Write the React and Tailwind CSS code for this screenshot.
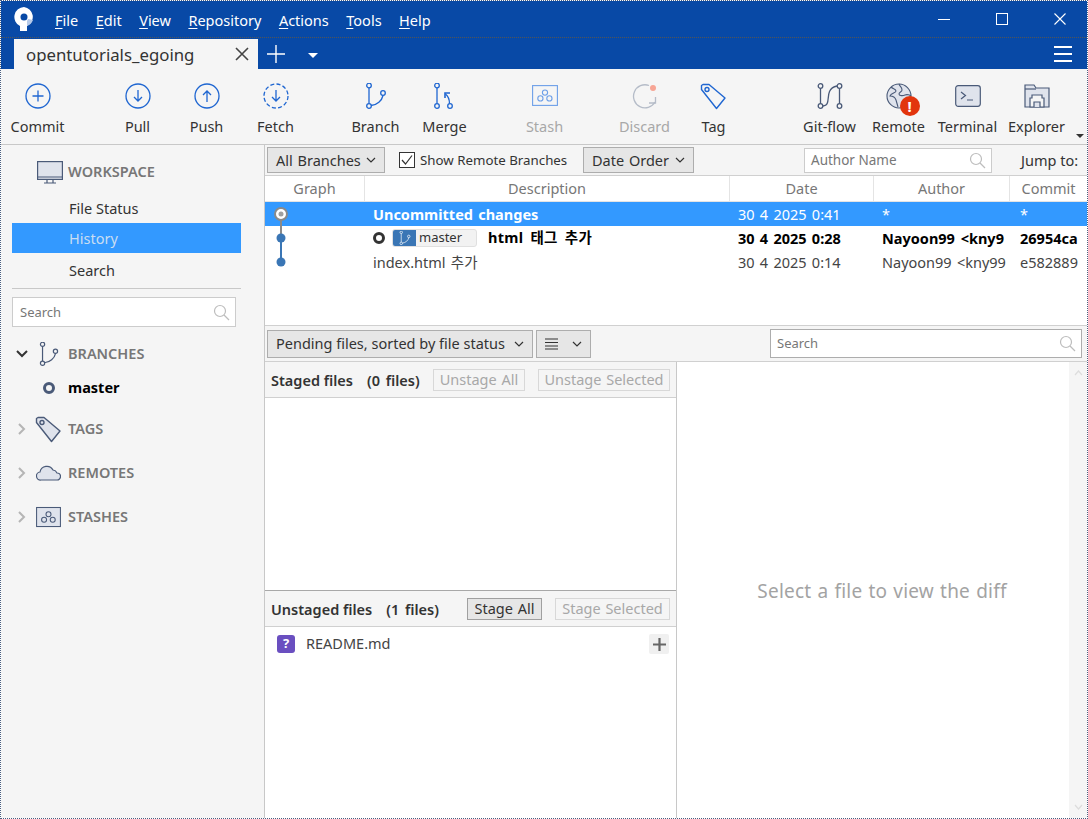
import React from 'react'

const blue = '#1f66d1'
const slate = '#4a5a78'
const fillSlate = '#dfe3ec'

function Chevron({ className = '' }) {
  return (
    <svg width="10" height="6" viewBox="0 0 10 6" className={className}>
      <path d="M1 1l4 4 4-4" fill="none" stroke="#333" strokeWidth="1.2" />
    </svg>
  )
}

function Mnemonic({ text }) {
  return (
    <span>
      <span className="underline underline-offset-2">{text[0]}</span>
      {text.slice(1)}
    </span>
  )
}

function SearchGlyph() {
  return (
    <svg width="17" height="17" viewBox="0 0 17 17">
      <circle cx="7" cy="7" r="5.5" fill="none" stroke="#bdbdbd" strokeWidth="1.2" />
      <path d="M11 11l5 5" stroke="#bdbdbd" strokeWidth="1.2" />
    </svg>
  )
}

function CircleIcon({ dashed, children }) {
  return (
    <svg width="26" height="26" viewBox="0 0 26 26">
      <circle cx="13" cy="13" r="12" fill="none" stroke={blue} strokeWidth="1.3" strokeDasharray={dashed ? '4 2.3' : undefined} />
      {children}
    </svg>
  )
}

const arrowDown = <path d="M13 7v11M9 14l4 4 4-4" fill="none" stroke={blue} strokeWidth="1.3" />
const arrowUp = <path d="M13 19V8M9 12l4-4 4 4" fill="none" stroke={blue} strokeWidth="1.3" />

function BranchIcon({ color = blue, size = 26 }) {
  return (
    <svg width={size} height={size} viewBox="0 0 26 26" fill="none" stroke={color} strokeWidth="1.3">
      <circle cx="6" cy="2.5" r="2.3" />
      <circle cx="6" cy="23" r="2.3" />
      <circle cx="20" cy="10" r="2.3" />
      <path d="M6 5v15.5M8 22.5c6-.5 11-5 12-10" />
    </svg>
  )
}

function MergeIcon() {
  return (
    <svg width="26" height="26" viewBox="0 0 26 26" fill="none" stroke={blue} strokeWidth="1.3">
      <circle cx="5" cy="2.5" r="2.3" />
      <circle cx="5" cy="23" r="2.3" />
      <circle cx="18" cy="23" r="2.3" />
      <path d="M5 5v15.5M17.5 20.5c0-4-1-7-4-9.5" />
      <path d="M13 15v-5h5" strokeWidth="1.6" />
    </svg>
  )
}

function StashIcon({ color = '#6d9fe8', fill = 'none', size = 26 }) {
  return (
    <svg width={size} height={size} viewBox="0 0 26 22" fill={fill} stroke={color} strokeWidth="1.1">
      <rect x="0.6" y="0.6" width="24.8" height="19.8" />
      <circle cx="13" cy="7.6" r="2.6" fill="none" />
      <circle cx="8.4" cy="13.4" r="2.6" fill="none" />
      <circle cx="17.4" cy="13.4" r="2.6" fill="none" />
    </svg>
  )
}

function DiscardIcon() {
  return (
    <svg width="26" height="26" viewBox="0 0 26 26" fill="none" stroke="#b5bcc8" strokeWidth="1.3">
      <path d="M17 2.5A11.5 11.5 0 1 0 23 19" />
      <path d="M17 20h6.5v-6" />
      <circle cx="21" cy="5" r="3" fill="#f7a595" stroke="none" />
    </svg>
  )
}

function TagIcon({ color = blue, fill = 'none' }) {
  return (
    <svg width="27" height="27" viewBox="0 0 27 27" fill={fill} stroke={color} strokeWidth="1.4">
      <path d="M1.5 6.5V2.5l1.5-1h6l16 13.5-8.5 10.5z" strokeLinejoin="round" />
      <circle cx="7" cy="6.5" r="2" />
    </svg>
  )
}

function GitFlowIcon() {
  return (
    <svg width="26" height="26" viewBox="0 0 26 26" fill="none" stroke={slate} strokeWidth="1.3">
      <circle cx="3.5" cy="3" r="2.3" />
      <circle cx="3.5" cy="23" r="2.3" />
      <circle cx="22.5" cy="3" r="2.3" />
      <circle cx="22.5" cy="23" r="2.3" />
      <path d="M3.5 5.5v15M22.5 5.5v15M6 23c7 0 4-9 6.5-14.5C14 5 17 3.5 20 3" />
    </svg>
  )
}

function GlobeIcon() {
  return (
    <svg width="26" height="26" viewBox="0 0 26 26" stroke={slate} strokeWidth="1.1">
      <circle cx="13" cy="13" r="12" fill={fillSlate} />
      <path d="M5 4c2 2 5 2 5 4s-5 2-6 5c2 0 5 1 6 4l2 7M13 1c1 3 3 3 3 6 0 2-3 2-3 4s4 2 6 1 5 0 6 1" fill="none" />
    </svg>
  )
}

function TerminalIcon() {
  return (
    <svg width="26" height="22" viewBox="0 0 26 22" fill={fillSlate} stroke={slate} strokeWidth="1.2">
      <rect x="0.7" y="0.7" width="24.6" height="20.6" rx="2.5" />
      <path d="M6 7l4.5 3.5L6 14M12 15h6" fill="none" />
    </svg>
  )
}

function ExplorerIcon() {
  return (
    <svg width="26" height="24" viewBox="0 0 26 24" fill={fillSlate} stroke={slate} strokeWidth="1.2">
      <path d="M1 23V1h9l2 3h13v19z" />
      <path d="M1 5h11" fill="none" />
      <path d="M6 23v-9h2v-3h10v3h2v9z" fill="#f5f5f5" />
      <path d="M10 23v-5h6v5" fill={fillSlate} />
    </svg>
  )
}

function ToolButton({ icon, label, disabled }) {
  return (
    <div className="flex h-[75px] w-[69px] flex-col items-center">
      <div className="mt-[13px] flex h-[28px] items-center justify-center">{icon}</div>
      <span className={`mt-[6px] text-[14.5px] leading-5 ${disabled ? 'text-[#a8a8a8]' : 'text-[#333]'}`}>{label}</span>
    </div>
  )
}

function Toolbar() {
  return (
    <div className="relative flex h-[76px] border-b border-[#c8c8c8] bg-[#f5f5f5] pl-[2px]">
      <ToolButton label="Commit" icon={<CircleIcon><path d="M7.5 13h11M13 7.5v11" stroke={blue} strokeWidth="1.3" /></CircleIcon>} />
      <div className="ml-[31px] flex">
        <ToolButton label="Pull" icon={<CircleIcon>{arrowDown}</CircleIcon>} />
        <ToolButton label="Push" icon={<CircleIcon>{arrowUp}</CircleIcon>} />
        <ToolButton label="Fetch" icon={<CircleIcon dashed>{arrowDown}</CircleIcon>} />
      </div>
      <div className="ml-[31px] flex">
        <ToolButton label="Branch" icon={<BranchIcon />} />
        <ToolButton label="Merge" icon={<MergeIcon />} />
      </div>
      <div className="ml-[31px] flex">
        <ToolButton label="Stash" disabled icon={<StashIcon />} />
      </div>
      <div className="ml-[31px] flex">
        <ToolButton label="Discard" disabled icon={<DiscardIcon />} />
        <ToolButton label="Tag" icon={<TagIcon />} />
      </div>
      <div className="ml-[47px] flex">
        <ToolButton label="Git-flow" icon={<GitFlowIcon />} />
        <ToolButton
          label="Remote"
          icon={
            <div className="relative">
              <GlobeIcon />
              <div className="absolute left-[14px] top-[13px] flex h-5 w-5 items-center justify-center rounded-full bg-[#e2350d] text-[15px] leading-none font-bold text-white">!</div>
            </div>
          }
        />
        <ToolButton label="Terminal" icon={<TerminalIcon />} />
        <ToolButton label="Explorer" icon={<ExplorerIcon />} />
      </div>
      <div className="absolute bottom-[6px] right-[3px] h-0 w-0 border-x-[4px] border-t-[4px] border-x-transparent border-t-[#333]" />
    </div>
  )
}

function TitleBar() {
  return (
    <div className="flex h-[37px] items-center border-b border-dotted border-[#555] bg-[#0849a6] text-white">
      <svg width="22" height="26" viewBox="0 0 22 26" className="ml-[12px]">
        <path d="M11 1a10 10 0 0 0-4 19v5h7v-5a10 10 0 0 0-3-19z" fill="#fff" />
        <circle cx="11" cy="11" r="3.5" fill="#0849a6" />
        <path d="M14 20a10 10 0 0 0 6-6l-5-1-1 2z" fill="#b5c9e8" />
      </svg>
      <nav className="ml-[20px] flex gap-[17.5px] pt-[3px] text-[14.5px]">
        {['File', 'Edit', 'View', 'Repository', 'Actions', 'Tools', 'Help'].map((m) => (
          <Mnemonic key={m} text={m} />
        ))}
      </nav>
      <div className="-mr-[2px] ml-auto flex items-center">
        <div className="flex h-[36px] w-[58px] items-center justify-center">
          <div className="mt-[1px] h-[1px] w-3 bg-white" />
        </div>
        <div className="flex h-[36px] w-[58px] items-center justify-center">
          <div className="h-3 w-3 border border-white" />
        </div>
        <div className="flex h-[36px] w-[58px] items-center justify-center">
          <svg width="12" height="12" viewBox="0 0 12 12">
            <path d="M.5.5l11 11M11.5.5l-11 11" stroke="#fff" strokeWidth="1.1" />
          </svg>
        </div>
      </div>
    </div>
  )
}

function TabRow() {
  return (
    <div className="flex h-[31px] items-end bg-[#0849a6] pl-[13px] text-white">
      <div className="flex h-[30px] w-[244px] items-center bg-[#f5f5f5] pl-[12px] pr-[9px] text-[16.8px] text-[#333]">
        <span className="flex-1 pt-px">opentutorials_egoing</span>
        <svg width="14" height="14" viewBox="0 0 14 14">
          <path d="M1 1l12 12M13 1L1 13" stroke="#444" strokeWidth="1.6" />
        </svg>
      </div>
      <div className="flex h-[30px] items-center">
        <svg width="18" height="18" viewBox="0 0 18 18" className="ml-[9px]">
          <path d="M9 0v18M0 9h18" stroke="#fff" strokeWidth="1.4" />
        </svg>
        <div className="ml-[23px] mt-[2px] h-0 w-0 border-x-[5px] border-t-[5px] border-x-transparent border-t-white" />
      </div>
      <div className="ml-auto mr-[15px] flex h-[30px] flex-col justify-center gap-[5px]">
        <div className="h-[2px] w-[18px] bg-white" />
        <div className="h-[2px] w-[18px] bg-white" />
        <div className="h-[2px] w-[18px] bg-white" />
      </div>
    </div>
  )
}

function NavItem({ label, active, className = 'pt-[2px]' }) {
  return (
    <div className={`flex h-[30px] items-center pl-[57px] text-[14.5px] ${active ? 'bg-[#3399ff] text-[#c9ddf2]' : 'text-[#333]'} ${className}`}>
      {label}
    </div>
  )
}

function SectionRow({ expanded, icon, label, className = '' }) {
  return (
    <div className={`flex h-[30px] items-center ${className}`}>
      <svg width="14" height="14" viewBox="0 0 14 14" className="ml-[14px]">
        {expanded ? (
          <path d="M2 4l5 5 5-5" fill="none" stroke="#333" strokeWidth="2" />
        ) : (
          <path d="M4 2l5 5-5 5" fill="none" stroke="#b5b5b5" strokeWidth="2" />
        )}
      </svg>
      <div className="flex w-[39px] justify-center">{icon}</div>
      <span className="text-[14.5px] font-semibold text-[#777]">{label}</span>
    </div>
  )
}

function Sidebar() {
  return (
    <aside className="w-[264px] shrink-0 border-r border-[#c8c8c8] bg-[#f5f5f5]">
      <div className="flex h-[48px] items-center pl-[36px] pt-[6px]">
        <svg width="26" height="23" viewBox="0 0 26 23" fill={fillSlate} stroke={slate} strokeWidth="1.2">
          <rect x="0.6" y="0.6" width="24.8" height="17.8" />
          <path d="M1 16h24M10 19v3M16 19v3M7 22h12" fill="none" />
        </svg>
        <span className="ml-[5px] text-[14.5px] font-semibold text-[#777]">WORKSPACE</span>
      </div>
      <div className="ml-[11px] mr-[23px]">
        <NavItem label="File Status" />
        <NavItem label="History" active />
        <NavItem label="Search" className="pt-[6px]" />
        <div className="mt-[5px] border-t border-[#c8c8c8]" />
        <div className="mt-[8px] flex h-[30px] w-[224px] items-center border border-[#ccc] bg-white pl-[7px] pr-[5px] text-[13px] text-[#777]">
          <span className="flex-1 pt-px">Search</span>
          <SearchGlyph />
        </div>
      </div>
      <SectionRow expanded className="mt-[12px]" label="BRANCHES" icon={<BranchIcon color={slate} size={24} />} />
      <div className="mt-[7px] flex h-[24px] items-center pl-[42px]">
        <div className="h-3 w-3 rounded-full border-[3px] border-[#4a5a78]" />
        <span className="ml-[13px] text-[14.5px] font-bold text-black">master</span>
      </div>
      <SectionRow className="mt-[14px]" label="TAGS" icon={<TagIcon color={slate} fill={fillSlate} />} />
      <SectionRow className="mt-[14px]" label="REMOTES" icon={
        <svg width="25" height="16" viewBox="0 0 25 16" fill={fillSlate} stroke={slate} strokeWidth="1.2">
          <path d="M5 15a4 4 0 0 1-1-8 7 7 0 0 1 13-2 5 5 0 0 1 4 3 3.5 3.5 0 0 1 0 7z" />
        </svg>
      } />
      <SectionRow className="mt-[14px]" label="STASHES" icon={<StashIcon color={slate} fill={fillSlate} size={25} />} />
    </aside>
  )
}

function Dropdown({ label, className = '' }) {
  return (
    <div className={`flex items-center justify-between border border-[#adadad] bg-[#e6e6e6] px-2 text-[14.5px] text-[#333] ${className}`}>
      <span className="pt-px">{label}</span>
      <Chevron />
    </div>
  )
}

function FilterBar() {
  return (
    <div className="flex h-[31px] items-center border-b border-[#d0d0d0] bg-[#f5f5f5] pl-[2px]">
      <Dropdown label="All Branches" className="h-[26px] w-[118px] [word-spacing:1px]" />
      <div className="ml-[14px] flex h-4 w-4 shrink-0 items-center justify-center border border-[#333] bg-white">
        <svg width="14" height="14" viewBox="0 0 14 14">
          <path d="M2 7l3.5 4L12 2.5" fill="none" stroke="#333" strokeWidth="1.2" />
        </svg>
      </div>
      <span className="ml-[5px] w-[148px] shrink-0 whitespace-nowrap pt-px text-[13.3px] text-[#333]">Show Remote Branches</span>
      <Dropdown label="Date Order" className="ml-[15px] h-[26px] w-[111px] shrink-0 [word-spacing:1px]" />
      <div className="ml-[110px] flex h-[25px] w-[188px] shrink-0 items-center justify-between border border-[#ccc] bg-white pl-[6px] pr-[5px] text-[13.5px] text-[#777]">
        <span className="pt-px">Author Name</span>
        <SearchGlyph />
      </div>
      <span className="ml-[29px] whitespace-nowrap pt-px text-[14.5px] text-[#333]">Jump to:</span>
    </div>
  )
}

const rowGrid = 'grid grid-cols-[100px_365px_144px_136px_1fr] items-center overflow-hidden whitespace-nowrap'

function HeaderCell({ label, last }) {
  return (
    <div className={`flex h-[25px] items-center justify-center text-[14.5px] text-[#777] ${last ? '' : 'border-r border-[#e4e4e4]'}`}>{label}</div>
  )
}

function Cell({ children, className = '' }) {
  return <div className={`overflow-hidden pl-2 pt-px [word-spacing:1.5px] ${className}`}>{children}</div>
}

function CommitGraph({ top, bottom, open, grayTop }) {
  const line = '#3a76b5'
  return (
    <svg width="32" height="24" viewBox="0 0 32 24">
      {top && <path d="M16 0v8" stroke={grayTop ? '#8a8a8a' : line} strokeWidth="2" />}
      {bottom && <path d="M16 12v12" stroke={open ? '#8a8a8a' : line} strokeWidth="2" />}
      {open ? (
        <>
          <circle cx="16" cy="12" r="6" fill="#fff" stroke="#8a8a8a" strokeWidth="2" />
          <circle cx="16" cy="12" r="2.5" fill="#a0a0a0" />
        </>
      ) : (
        <circle cx="16" cy="12" r="4.5" fill={line} />
      )}
    </svg>
  )
}

function CommitTable() {
  return (
    <div className="h-[149px] bg-white">
      <div className={`${rowGrid} border-b border-[#e4e4e4] bg-white`}>
        <HeaderCell label="Graph" />
        <HeaderCell label="Description" />
        <HeaderCell label="Date" />
        <HeaderCell label="Author" />
        <HeaderCell label="Commit" last />
      </div>
      <div className={`${rowGrid} h-[24px] bg-[#3399ff] text-[14.5px] text-white`}>
        <CommitGraph open bottom />
        <Cell className="font-bold [word-spacing:0px]">Uncommitted changes</Cell>
        <Cell>30 4 2025 0:41</Cell>
        <Cell>*</Cell>
        <Cell className="pl-[10px]">*</Cell>
      </div>
      <div className={`${rowGrid} h-[24px] text-[14.5px] font-bold text-black`}>
        <CommitGraph top grayTop bottom />
        <div className="flex items-center pl-2">
          <div className="h-3 w-3 rounded-full border-[3px] border-[#333]" />
          <div className="ml-[7px] flex h-[18px] w-[85px] items-center overflow-hidden rounded-[3px] border border-[#e0e0e0] bg-[#f2f2f2] text-[13px] font-normal text-[#333]">
            <div className="flex h-full w-[23px] items-center justify-center bg-[#3a76b5]">
              <BranchIcon color="#fff" size={14} />
            </div>
            <span className="ml-[3px]">master</span>
          </div>
          <span className="ml-[11px] tracking-[0.3px] [word-spacing:3px]">html 태그 추가</span>
        </div>
        <Cell>30 4 2025 0:28</Cell>
        <Cell className="[word-spacing:2px]">Nayoon99 &lt;kny9</Cell>
        <Cell className="pl-[10px]">26954ca</Cell>
      </div>
      <div className={`${rowGrid} h-[24px] text-[14.5px] text-[#444]`}>
        <CommitGraph top />
        <Cell>index.html 추가</Cell>
        <Cell>30 4 2025 0:14</Cell>
        <Cell>Nayoon99 &lt;kny99</Cell>
        <Cell className="pl-[10px]">e582889</Cell>
      </div>
    </div>
  )
}

function ActionButton({ label, disabled, className = '' }) {
  return (
    <div className={`flex h-[22px] items-center justify-center border pt-px text-[14.5px] [word-spacing:1px] ${disabled ? 'border-[#d8d8d8] text-[#a8a8a8]' : 'border-[#a0a0a0] bg-[#e6e6e6] text-[#333]'} ${className}`}>
      {label}
    </div>
  )
}

function FileHeader({ title, count, children }) {
  return (
    <div className="flex h-[36px] items-center border-b border-[#d0d0d0] bg-[#f5f5f5] px-[6px]">
      <span className="pt-[2px] text-[14.5px] font-semibold text-[#333]">{title}</span>
      <span className="ml-[14px] pt-[2px] text-[14.5px] font-semibold text-[#333] [word-spacing:2px]">{count}</span>
      <div className="ml-auto flex gap-[13px]">{children}</div>
    </div>
  )
}

function FilesPane() {
  return (
    <div className="flex h-[457px] w-[412px] shrink-0 flex-col border-r border-[#c8c8c8] bg-white">
      <FileHeader title="Staged files" count="(0 files)">
        <ActionButton label="Unstage All" disabled className="w-[92px]" />
        <ActionButton label="Unstage Selected" disabled className="w-[132px]" />
      </FileHeader>
      <div className="h-[192px]" />
      <div className="border-t border-[#a8a8a8]" />
      <FileHeader title="Unstaged files" count="(1 files)">
        <ActionButton label="Stage All" className="w-[75px]" />
        <ActionButton label="Stage Selected" disabled className="w-[115px]" />
      </FileHeader>
      <div className="flex h-[34px] items-center pl-[12px] pr-[7px]">
        <div className="flex h-[18px] w-[18px] items-center justify-center rounded-[3px] bg-[#6a4fc0] text-[13px] font-bold text-white">?</div>
        <span className="ml-[11px] text-[14.5px] text-[#444]">README.md</span>
        <div className="ml-auto flex h-5 w-5 items-center justify-center rounded-[2px] bg-[#f0f0f0]">
          <svg width="13" height="13" viewBox="0 0 13 13">
            <path d="M6.5 0v13M0 6.5h13" stroke="#666" strokeWidth="2.2" />
          </svg>
        </div>
      </div>
    </div>
  )
}

function DiffPane() {
  return (
    <div className="flex flex-1 bg-white">
      <div className="flex flex-1 items-center justify-center pl-[18px] pt-[2px] text-[19px] tracking-[0.2px] text-[#a3a3a3] [word-spacing:1px]">Select a file to view the diff</div>
      <div className="flex w-[18px] flex-col justify-between bg-[#f5f5f5] px-[5px] py-[8px]">
        <svg width="9" height="6" viewBox="0 0 9 6"><path d="M1 5l3.5-4L8 5" fill="none" stroke="#ddd" strokeWidth="1.2" /></svg>
        <svg width="9" height="6" viewBox="0 0 9 6"><path d="M1 1l3.5 4L8 1" fill="none" stroke="#ddd" strokeWidth="1.2" /></svg>
      </div>
    </div>
  )
}

export default function App() {
  return (
    <div className="flex h-[819px] w-[1088px] flex-col overflow-hidden border border-dotted border-[#4a5f80] font-['Noto_Sans','Noto_Sans_CJK_KR',sans-serif]">
      <TitleBar />
      <TabRow />
      <Toolbar />
      <div className="flex min-h-0 flex-1">
        <Sidebar />
        <main className="flex min-w-0 flex-1 flex-col">
          <FilterBar />
          <CommitTable />
          <div className="flex h-[37px] items-center gap-[2px] border-y border-[#d0d0d0] bg-[#f5f5f5] pl-[2px] pr-[5px]">
            <Dropdown label="Pending files, sorted by file status" className="h-[28px] w-[266px]" />
            <div className="ml-[1px] flex h-[28px] w-[55px] items-center justify-between border border-[#adadad] bg-[#e6e6e6] px-2">
              <svg width="13" height="12" viewBox="0 0 13 12"><path d="M0 1h13M0 4.5h13M0 8h13M0 11h13" stroke="#333" /></svg>
              <Chevron />
            </div>
            <div className="ml-auto flex h-[29px] w-[312px] items-center justify-between border border-[#adadad] bg-white pl-[6px] pr-[5px] text-[13px] text-[#777]">
              <span className="pt-px">Search</span>
              <SearchGlyph />
            </div>
          </div>
          <div className="flex min-h-0 flex-1">
            <FilesPane />
            <DiffPane />
          </div>
        </main>
      </div>
    </div>
  )
}
